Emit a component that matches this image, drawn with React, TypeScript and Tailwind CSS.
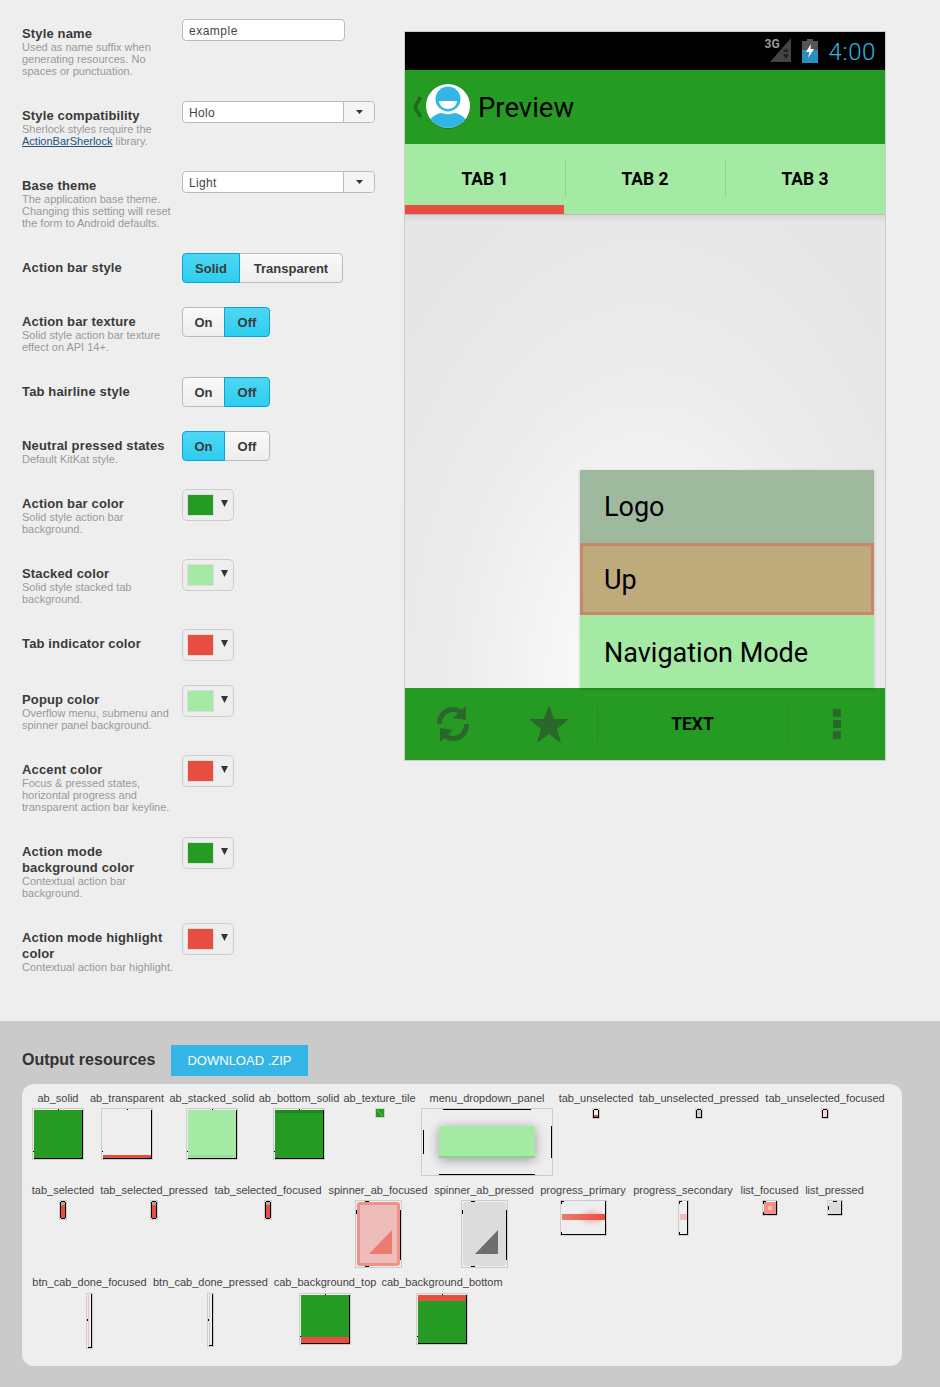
import type { ReactNode } from 'react'

const GREEN = '#259b24'
const LIGHT = '#a4e9a4'
const RED = '#e84e40'

function Row({ title, help, h, children }: { title: ReactNode; help?: ReactNode; h: string; children: ReactNode }) {
  return (
    <div className={`flex ${h}`}>
      <div className="w-[160px] pt-[7px]">
        <div className="text-[13px] leading-[16px] font-bold tracking-[0.15px] text-[#3a3a3a]">{title}</div>
        {help && <div className="-mt-px text-[11px] leading-[12px] text-[#999]">{help}</div>}
      </div>
      {children}
    </div>
  )
}

function Select({ value }: { value: string }) {
  return (
    <div className="flex h-[22px] w-[193px] rounded-[4px] border border-[#bbb] bg-white text-[12px] leading-[22px] tracking-[0.3px] text-[#444]">
      <div className="flex-1 pl-[6px]">{value}</div>
      <div className="flex w-[31px] items-center justify-center rounded-r-[4px] border-l border-[#bbb] bg-[#f4f4f4]">
        <Caret w={7} h={4} />
      </div>
    </div>
  )
}

function Caret({ w, h }: { w: number; h: number }) {
  return (
    <svg width={w} height={h} viewBox={`0 0 ${w} ${h}`}>
      <polygon points={`0,0 ${w},0 ${w / 2},${h}`} fill="#333" />
    </svg>
  )
}

function Toggle({ options, active, widths }: { options: string[]; active: number; widths: string[] }) {
  return (
    <div className="flex h-[30px] text-[13px] leading-[29px] font-bold text-[#3a3a3a]">
      {options.map((o, i) => (
        <div
          key={o}
          className={[
            'border text-center',
            widths[i],
            i === 0 ? 'rounded-l-[4px]' : 'rounded-r-[4px] -ml-px',
            i === active
              ? 'z-10 border-[#0aa2d8] bg-gradient-to-b from-[#4cd7f2] to-[#2ccdf0]'
              : 'border-[#bbb] bg-gradient-to-b from-[#f9f9f9] to-[#eeeeee]',
          ].join(' ')}
        >
          {o}
        </div>
      ))}
    </div>
  )
}

function OnOff({ on }: { on: boolean }) {
  return <Toggle options={['On', 'Off']} active={on ? 0 : 1} widths={['w-[43px]', 'w-[46px]']} />
}

function ColorButton({ color }: { color: string }) {
  return (
    <div className="flex h-[32px] w-[52px] items-start rounded-[5px] border border-[#ccc] pt-[4px] pl-[4px]">
      <div className="h-[22px] w-[27px] border border-[#ddd]" style={{ backgroundColor: color }} />
      <div className="ml-[7px] pt-[6px]">
        <Caret w={7} h={7} />
      </div>
    </div>
  )
}

function Form() {
  return (
    <div className="w-[404px] pt-[19px] pl-[22px] font-['Liberation_Sans',sans-serif]">
      <Row h="h-[82px]" title="Style name" help={<>Used as name suffix when<br />generating resources. No<br />spaces or punctuation.</>}>
        <div className="h-[22px] w-[163px] rounded-[4px] border border-[#bbb] bg-white pl-[6px] text-[12px] leading-[22px] tracking-[0.5px] text-[#444]">example</div>
      </Row>
      <Row
        h="h-[70px]"
        title="Style compatibility"
        help={<>Sherlock styles require the<br /><span className="text-[#23527c] underline">ActionBarSherlock</span> library.</>}
      >
        <Select value="Holo" />
      </Row>
      <Row h="h-[82px]" title="Base theme" help={<>The application base theme.<br />Changing this setting will reset<br />the form to Android defaults.</>}>
        <Select value="Light" />
      </Row>
      <Row h="h-[54px]" title="Action bar style">
        <Toggle options={['Solid', 'Transparent']} active={0} widths={['w-[58px]', 'w-[104px]']} />
      </Row>
      <Row h="h-[70px]" title="Action bar texture" help={<>Solid style action bar texture<br />effect on API 14+.</>}>
        <OnOff on={false} />
      </Row>
      <Row h="h-[54px]" title="Tab hairline style">
        <OnOff on={false} />
      </Row>
      <Row h="h-[58px]" title="Neutral pressed states" help="Default KitKat style.">
        <OnOff on />
      </Row>
      <Row h="h-[70px]" title="Action bar color" help={<>Solid style action bar<br />background.</>}>
        <ColorButton color={GREEN} />
      </Row>
      <Row h="h-[70px]" title="Stacked color" help={<>Solid style stacked tab<br />background.</>}>
        <ColorButton color={LIGHT} />
      </Row>
      <Row h="h-[56px]" title="Tab indicator color">
        <ColorButton color={RED} />
      </Row>
      <Row h="h-[70px]" title="Popup color" help={<>Overflow menu, submenu and<br />spinner panel background.</>}>
        <ColorButton color={LIGHT} />
      </Row>
      <Row h="h-[82px]" title="Accent color" help={<>Focus &amp; pressed states,<br />horizontal progress and<br />transparent action bar keyline.</>}>
        <ColorButton color={RED} />
      </Row>
      <Row h="h-[86px]" title={<>Action mode<br />background color</>} help={<>Contextual action bar<br />background.</>}>
        <ColorButton color={GREEN} />
      </Row>
      <Row h="h-[98px]" title={<>Action mode highlight<br />color</>} help="Contextual action bar highlight.">
        <ColorButton color={RED} />
      </Row>
    </div>
  )
}

function StatusBar() {
  return (
    <div className="flex h-[38px] items-start justify-end bg-black pr-[9px]">
      <div className="relative h-[32px] w-[30px]">
        <span className="absolute top-[5px] left-[2px] text-[12px] leading-[14px] font-bold text-[#9a9a9a]">3G</span>
        <svg className="absolute top-[6px] left-[7px]" width="22" height="24" viewBox="0 0 22 24">
          <polygon points="21,0 21,24 0,24" fill="#444" />
          <polygon points="16,10 19,14 13,14" fill="#222" />
          <polygon points="16,21 19,16 13,16" fill="#222" />
        </svg>
      </div>
      <svg className="mt-[7px] ml-[9px]" width="16" height="24" viewBox="0 0 16 24">
        <rect x="5" y="0" width="6" height="2" fill="#555" />
        <rect x="0" y="2" width="16" height="22" fill="#555" />
        <rect x="0" y="11" width="16" height="13" fill="#2a8fc0" />
        <polygon points="9,5 4,13 7.5,13 6,19 12,10 8.5,10" fill="#fff" />
      </svg>
      <div className="ml-[11px] pt-px font-['Roboto',sans-serif] text-[24px] leading-[38px] font-light tracking-[0.6px] text-[#33b5e5]">4:00</div>
    </div>
  )
}

function Avatar() {
  return (
    <svg width="44" height="45" viewBox="0 0 44 45">
      <circle cx="22" cy="23" r="22" fill="#1b7a1a" />
      <circle cx="22" cy="22" r="22" fill="#fff" />
      <clipPath id="avatar-clip">
        <circle cx="22" cy="22" r="22" />
      </clipPath>
      <circle cx="22" cy="15" r="12.5" fill="#33b5e5" />
      <path d="M13 17 H31 A9 8 0 0 1 13 17 Z" fill="#fff" />
      <path d="M3 44 V37 C6 32 12 29 16 29 C19 30.5 25 30.5 28 29 C32 29 38 32 41 37 V44 Z" fill="#33b5e5" clipPath="url(#avatar-clip)" />
    </svg>
  )
}

function BottomBar() {
  return (
    <div className="flex h-[72px] items-center bg-[#259b24]">
      <div className="flex w-[96px] justify-center">
        <svg width="34" height="36" viewBox="0 0 34 36" fill="none" stroke="#2b662b" strokeWidth="5">
          <path d="M3.5 18 C3.5 9 10 3.5 17 3.5 C21 3.5 25 5.5 27 9" />
          <path d="M30.5 18 C30.5 27 24 32.5 17 32.5 C13 32.5 9 30.5 7 27" />
          <polygon points="30,0 30,14 17,12" fill="#2b662b" stroke="none" />
          <polygon points="4,36 4,22 17,24" fill="#2b662b" stroke="none" />
        </svg>
      </div>
      <div className="flex w-[96px] justify-center">
        <svg width="40" height="38" viewBox="0 0 40 38">
          <polygon points="20,0 25,14 40,14 28,24 32,38 20,29 8,38 12,24 0,14 15,14" fill="#2b662b" />
        </svg>
      </div>
      <div className="h-[36px] w-px bg-[#2a8a29]" />
      <div className="flex-1 pt-px text-center font-['Roboto',sans-serif] text-[17.5px] font-bold text-[#0a0a0a]">TEXT</div>
      <div className="h-[36px] w-px bg-[#2a8a29]" />
      <div className="flex w-[97px] flex-col items-center gap-[3px]">
        <div className="h-[8px] w-[8px] bg-[#2b662b]" />
        <div className="h-[8px] w-[8px] bg-[#2b662b]" />
        <div className="h-[8px] w-[8px] bg-[#2b662b]" />
      </div>
    </div>
  )
}

function Preview() {
  return (
    <div className="mt-[31px] h-[730px] w-[482px] border border-[#ccc] font-['Roboto',sans-serif] text-black">
      <StatusBar />
      <div className="flex h-[74px] items-center bg-[#259b24] pl-[7px]">
        <svg width="10" height="22" viewBox="0 0 10 22" fill="none" stroke="#1d6b1c" strokeWidth="3.5">
          <path d="M8.5 1 L3 11 L8.5 21" />
        </svg>
        <div className="-mt-px ml-[4px]">
          <Avatar />
        </div>
        <div className="ml-[8px] pt-px text-[27.5px] leading-[36px]">Preview</div>
      </div>
      <div className="relative flex h-[71px] border-b border-[#bbb] bg-[#a4e9a4] text-[17.5px] font-bold">
        {['TAB 1', 'TAB 2', 'TAB 3'].map((t, i) => (
          <div key={t} className="relative flex flex-1 items-center justify-center">
            {t}
            {i < 2 && <span className="absolute top-[16px] -right-px h-[36px] w-px bg-[#8fd28f]" />}
          </div>
        ))}
        <div className="absolute bottom-0 left-0 h-[9px] w-[159px] bg-[#e84e40]" />
      </div>
      <div className="relative h-[473px] bg-[radial-gradient(ellipse_320px_520px_at_50%_100%,#ffffff_0%,#ececec_60%,#e6e6e6_100%)]">
        <div className="h-[8px] bg-gradient-to-b from-[#d8d8d8] to-transparent" />
        <div className="absolute right-[11px] bottom-0 w-[294px] text-[27px] shadow-[0_1px_3px_rgba(0,0,0,0.2)]">
          <div className="flex h-[73px] items-center bg-[#9fb99f] pt-px pl-[24px]">Logo</div>
          <div className="flex h-[72px] items-center border-[3px] border-[#c8866a] bg-[#beaa7b] pt-[2px] pl-[21px]">Up</div>
          <div className="flex h-[73px] items-center bg-[#a4e9a4] pt-[3px] pl-[24px]">Navigation Mode</div>
        </div>
      </div>
      <BottomBar />
    </div>
  )
}

function Thumb({ w, h, children }: { w: number; h: number; children?: ReactNode }) {
  return (
    <svg width={w} height={h} viewBox={`0 0 ${w} ${h}`} className="block">
      {children}
      <rect x="0.5" y="0.5" width={w - 1} height={h - 1} fill="none" stroke="#ccc" />
    </svg>
  )
}

function K({ x, y, w = 1, h = 1 }: { x: number; y: number; w?: number; h?: number }) {
  return <rect x={x} y={y} width={w} height={h} fill="#000" />
}

function Square({ fill, strip }: { fill: string; strip?: ReactNode }) {
  return (
    <Thumb w={52} h={52}>
      <rect x="2" y="2" width="48" height="48" fill={fill} />
      {strip}
      <K x={26} y={1} />
      <K x={1} y={43} />
      <K x={50} y={2} h={49} />
      <K x={2} y={50} w={49} />
    </Thumb>
  )
}

function SmallTab({ fill, y }: { fill: string; y: number }) {
  return (
    <Thumb w={8} h={11}>
      <rect x="2" y={y} width="4" height={9 - y} fill={fill} />
      <K x={1} y={2} h={8} />
      <K x={6} y={2} h={8} />
      <K x={2} y={1} w={4} />
      <K x={2} y={9} w={4} />
    </Thumb>
  )
}

function SelectedTab({ fill }: { fill: string }) {
  return (
    <Thumb w={8} h={20}>
      <rect x="2" y="2" width="4" height="16" fill="#aaa" />
      <rect x="2" y="5" width="4" height="13" fill={fill} />
      <K x={1} y={2} h={16} />
      <K x={6} y={2} h={16} />
      <K x={2} y={1} w={4} />
      <K x={2} y={18} w={4} />
    </Thumb>
  )
}

function Spinner({ border, fill, tri }: { border: string; fill: string; tri: string }) {
  return (
    <Thumb w={47} h={68}>
      <rect x="2" y="2" width="43" height="64" rx="3" fill={border} />
      <rect x="5" y="5" width="37" height="58" fill={fill} />
      <polygon points="37,30 37,54 14,54" fill={tri} />
      <K x={10} y={1} w={4} />
      <K x={10} y={66} w={4} />
      <K x={1} y={10} h={4} />
      <K x={45} y={10} h={50} />
    </Thumb>
  )
}

function Corners({ w, h }: { w: number; h: number }) {
  return (
    <>
      <K x={1} y={1} w={3} />
      <K x={1} y={1} h={3} />
      <K x={1} y={h - 4} h={3} />
      <K x={1} y={h - 2} w={3} />
      <K x={w - 2} y={1} h={h - 2} />
      <K x={1} y={h - 2} w={w - 2} />
    </>
  )
}

function CabDone({ h, line }: { h: number; line: string }) {
  return (
    <Thumb w={7} h={h}>
      <rect x="2" y="2" width="3" height={h - 4} fill="#eee" />
      <rect x="2" y="2" width="1" height={h - 4} fill={line} />
      <K x={5} y={1} h={h - 2} />
      <K x={2} y={h - 2} w={3} />
      <K x={1} y={26} h={2} />
    </Thumb>
  )
}

type Asset = { name: string; width: string; thumb: ReactNode }

const row1: Asset[] = [
  { name: 'ab_solid', width: 'w-[52px]', thumb: <Square fill={GREEN} /> },
  {
    name: 'ab_transparent',
    width: 'w-[74px]',
    thumb: (
      <Thumb w={52} h={52}>
        <rect x="2" y="47" width="48" height="3" fill={RED} />
        <K x={26} y={1} />
        <K x={1} y={43} />
        <K x={50} y={2} h={49} />
        <K x={2} y={50} w={49} />
      </Thumb>
    ),
  },
  { name: 'ab_stacked_solid', width: 'w-[84px]', thumb: <Square fill={LIGHT} strip={<rect x="2" y="47" width="48" height="3" fill="#9adf9a" />} /> },
  { name: 'ab_bottom_solid', width: 'w-[78px]', thumb: <Square fill={GREEN} strip={<rect x="2" y="2" width="48" height="3" fill="#1f861f" />} /> },
  {
    name: 'ab_texture_tile',
    width: 'w-[71px]',
    thumb: (
      <Thumb w={10} h={10}>
        <rect x="1" y="1" width="8" height="8" fill={GREEN} />
        <path d="M2 2 L8 8" stroke="#7fb87f" />
      </Thumb>
    ),
  },
  {
    name: 'menu_dropdown_panel',
    width: 'w-[132px]',
    thumb: (
      <Thumb w={132} h={68}>
        <defs>
          <filter id="panel-shadow" x="-20%" y="-40%" width="140%" height="200%">
            <feGaussianBlur stdDeviation="6" />
          </filter>
        </defs>
        <rect x="18" y="20" width="96" height="32" fill="#000" opacity="0.35" filter="url(#panel-shadow)" />
        <rect x="18" y="18" width="96" height="32" fill={LIGHT} />
        <rect x="18" y="48" width="96" height="2" fill="#8bd48b" />
        <K x={22} y={1} w={88} />
        <K x={18} y={66} w={96} />
        <K x={2} y={22} h={24} />
        <K x={130} y={18} h={32} />
      </Thumb>
    ),
  },
  { name: 'tab_unselected', width: 'w-[74px]', thumb: <SmallTab fill={RED} y={7} /> },
  { name: 'tab_unselected_pressed', width: 'w-[120px]', thumb: <SmallTab fill="#ccc" y={2} /> },
  { name: 'tab_unselected_focused', width: 'w-[120px]', thumb: <SmallTab fill="#f8d5d2" y={2} /> },
]

const row2: Asset[] = [
  { name: 'tab_selected', width: 'w-[62px]', thumb: <SelectedTab fill={RED} /> },
  { name: 'tab_selected_pressed', width: 'w-[108px]', thumb: <SelectedTab fill={RED} /> },
  { name: 'tab_selected_focused', width: 'w-[108px]', thumb: <SelectedTab fill={RED} /> },
  { name: 'spinner_ab_focused', width: 'w-[100px]', thumb: <Spinner border="#ef9089" fill="#eebdb9" tri="#ea7c72" /> },
  { name: 'spinner_ab_pressed', width: 'w-[100px]', thumb: <Spinner border="#dcdcdc" fill="#dcdcdc" tri="#6e6e6e" /> },
  {
    name: 'progress_primary',
    width: 'w-[86px]',
    thumb: (
      <Thumb w={47} h={36}>
        <defs>
          <linearGradient id="progress-bar" x1="0" x2="1" y1="0" y2="0">
            <stop offset="0" stopColor="#ef7a6e" />
            <stop offset="1" stopColor={RED} />
          </linearGradient>
          <filter id="progress-glow" x="-30%" y="-100%" width="160%" height="300%">
            <feGaussianBlur stdDeviation="2" />
          </filter>
        </defs>
        <ellipse cx="32" cy="17" rx="11" ry="6" fill={RED} opacity="0.3" filter="url(#progress-glow)" />
        <rect x="2" y="14" width="44" height="6" fill="url(#progress-bar)" />
        <Corners w={47} h={36} />
      </Thumb>
    ),
  },
  {
    name: 'progress_secondary',
    width: 'w-[102px]',
    thumb: (
      <Thumb w={11} h={36}>
        <rect x="2" y="14" width="7" height="6" fill="#eebdb9" />
        <Corners w={11} h={36} />
      </Thumb>
    ),
  },
  {
    name: 'list_focused',
    width: 'w-[59px]',
    thumb: (
      <Thumb w={16} h={16}>
        <rect x="2" y="2" width="12" height="12" fill="#ef9089" />
        <rect x="6" y="6" width="4" height="4" fill="#f3bcb6" />
        <Corners w={16} h={16} />
      </Thumb>
    ),
  },
  {
    name: 'list_pressed',
    width: 'w-[59px]',
    thumb: (
      <Thumb w={16} h={16}>
        <rect x="2" y="2" width="12" height="12" fill="#dcdcdc" />
        <K x={6} y={1} w={4} />
        <K x={1} y={6} h={4} />
        <K x={14} y={1} h={14} />
        <K x={1} y={14} w={14} />
      </Thumb>
    ),
  },
]

const row3: Asset[] = [
  { name: 'btn_cab_done_focused', width: 'w-[115px]', thumb: <CabDone h={56} line="#f3bcb6" /> },
  { name: 'btn_cab_done_pressed', width: 'w-[115px]', thumb: <CabDone h={54} line="#ccc" /> },
  {
    name: 'cab_background_top',
    width: 'w-[102px]',
    thumb: <Square fill={GREEN} strip={<rect x="2" y="44" width="48" height="6" fill={RED} />} />,
  },
  {
    name: 'cab_background_bottom',
    width: 'w-[120px]',
    thumb: <Square fill={GREEN} strip={<rect x="2" y="2" width="48" height="6" fill={RED} />} />,
  },
]

function AssetRow({ items, rowClass, labelClass }: { items: Asset[]; rowClass: string; labelClass: string }) {
  return (
    <div className={`flex items-start gap-[6px] ${rowClass}`}>
      {items.map((a) => (
        <div key={a.name} className={`flex flex-col items-center ${a.width}`}>
          <div className={`text-[11px] leading-[12px] whitespace-nowrap text-[#444] ${labelClass}`}>{a.name}</div>
          {a.thumb}
        </div>
      ))}
    </div>
  )
}

function Output() {
  return (
    <div className="h-[366px] bg-[#cacaca] px-[22px] pt-[24px] font-['Liberation_Sans',sans-serif]">
      <div className="flex h-[31px] items-center">
        <div className="w-[149px] pb-[2px] text-[16px] font-bold text-[#333]">Output resources</div>
        <div className="flex h-[31px] w-[137px] items-center justify-center bg-[#33b5e5] text-[13px] text-white">DOWNLOAD .ZIP</div>
      </div>
      <div className="mt-[8px] h-[282px] w-[880px] rounded-[12px] bg-[#eeeeee] pt-[8px] pl-[10px]">
        <AssetRow items={row1} rowClass="h-[92px]" labelClass="pb-[4px]" />
        <AssetRow items={row2} rowClass="h-[92px]" labelClass="pb-[4px]" />
        <AssetRow items={row3} rowClass="h-[74px]" labelClass="pb-[5px]" />
      </div>
    </div>
  )
}

export default function App() {
  return (
    <div className="min-h-[1387px] w-[940px] bg-[#eeeeee]">
      <div className="flex">
        <Form />
        <Preview />
      </div>
      <Output />
    </div>
  )
}
